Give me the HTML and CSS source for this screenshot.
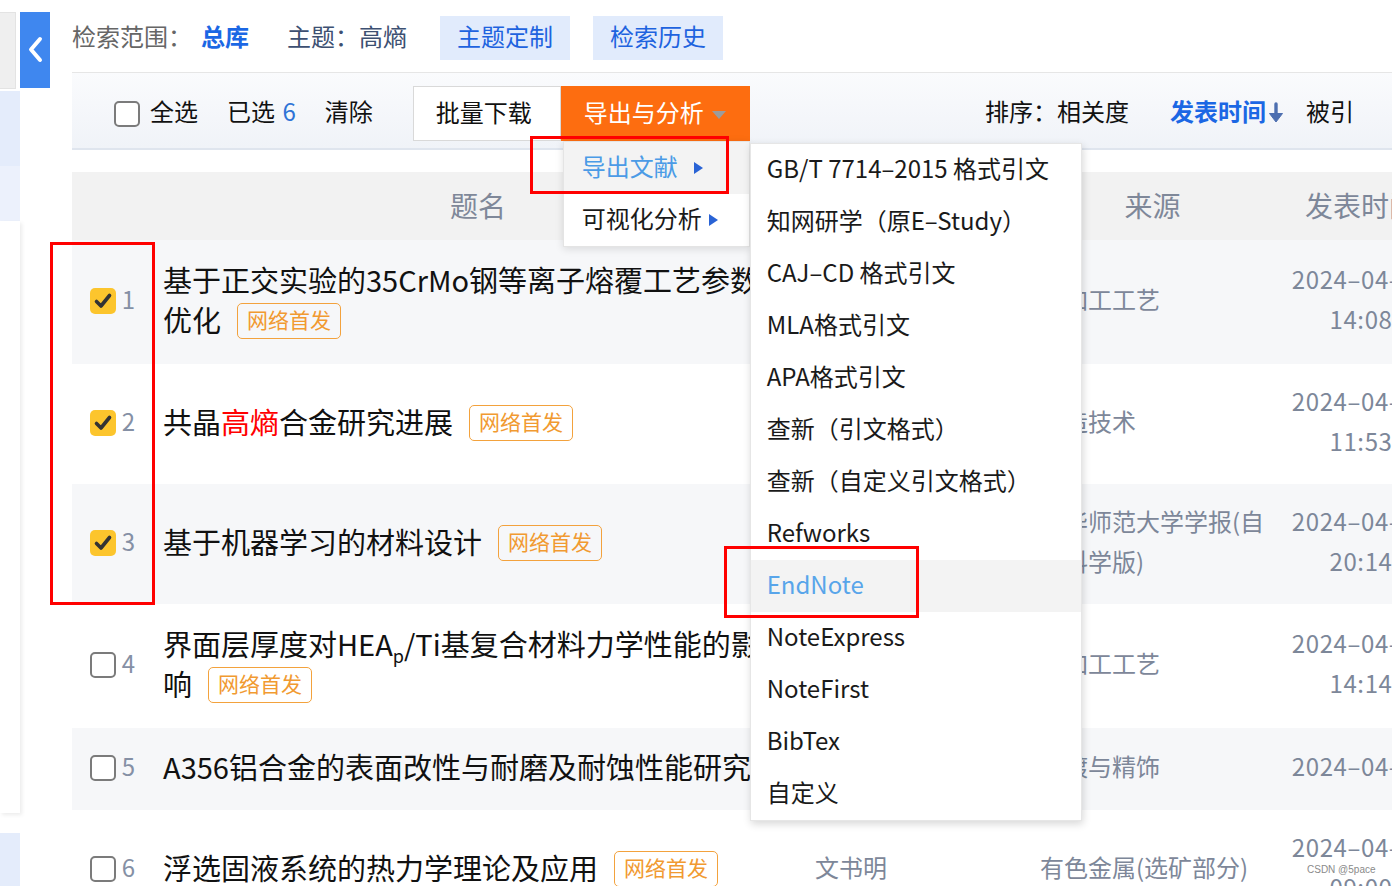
FILE: index.html
```html
<!DOCTYPE html>
<html lang="zh-CN">
<head>
<meta charset="utf-8">
<title>检索结果</title>
<link rel="stylesheet" href="styles.css">
</head>
<body>
<div class="page">
  <aside class="side">
    <div class="side-grey"></div>
    <div class="side-blue1"></div>
    <div class="side-blue2"></div>
    <div class="side-panel"></div>
    <div class="side-blue3"></div>
  </aside>
  <div class="collapse">
    <svg width="30" height="76" viewBox="0 0 30 76"><polyline points="20,27 11,37.5 20,48" fill="none" stroke="#fff" stroke-width="4" stroke-linecap="round" stroke-linejoin="round"/></svg>
  </div>
  <main class="main">
    <div class="crumbs">
      <span class="label">检索范围：</span>
      <span class="scope">总库</span>
      <span class="topic">主题：高熵</span>
      <span class="chip">主题定制</span>
      <span class="chip chip-2">检索历史</span>
    </div>

    <div class="toolbar">
      <span class="cb"></span>
      <span class="tb-text">全选</span>
      <span class="tb-text tb-sel">已选 <em>6</em></span>
      <span class="tb-text tb-clear">清除</span>
      <div class="btns">
        <span class="btn">批量下载</span>
        <div class="export">
          <span class="btn btn-orange">导出与分析<i class="caret"></i></span>
          <div class="menu">
            <div class="menu-item active">导出文献<i class="tri"></i></div>
            <div class="menu-item">可视化分析<i class="tri tri-2"></i></div>
            <ul class="submenu">
              <li>GB/T 7714–2015 格式引文</li>
              <li>知网研学（原E–Study）</li>
              <li>CAJ–CD 格式引文</li>
              <li>MLA格式引文</li>
              <li>APA格式引文</li>
              <li>查新（引文格式）</li>
              <li>查新（自定义引文格式）</li>
              <li>Refworks</li>
              <li class="hover">EndNote</li>
              <li>NoteExpress</li>
              <li>NoteFirst</li>
              <li>BibTex</li>
              <li>自定义</li>
            </ul>
          </div>
        </div>
      </div>
      <div class="sort">
        <span class="tb-text-r">排序：相关度</span>
        <span class="sort-on">发表时间<svg class="arrow" width="18" height="24" viewBox="0 0 18 24"><line x1="9" y1="3" x2="9" y2="16" stroke="#4d6fb0" stroke-width="3.4" stroke-linecap="round"/><polygon points="2.5,12.5 15.5,12.5 9,21" fill="#4d6fb0" stroke="#4d6fb0" stroke-width="1" stroke-linejoin="round"/></svg></span>
        <span class="tb-text-r sort-cite">被引</span>
      </div>
    </div>

    <div class="table">
      <div class="thead">
        <div class="c-check"></div>
        <div class="c-title th-center">题名</div>
        <div class="c-author th-center">作者</div>
        <div class="c-source th-center">来源</div>
        <div class="c-date">发表时间</div>
      </div>

      <div class="row row-odd row-tall">
        <div class="c-check"><span class="cb cb-on"><svg width="26" height="26" viewBox="0 0 26 26"><path d="M6.5 13.5 L11 18 L19.5 7.5" fill="none" stroke="#333" stroke-width="3.6" stroke-linecap="round" stroke-linejoin="round"/></svg></span><span class="num">1</span></div>
        <div class="c-title">基于正交实验的35CrMo钢等离子熔覆工艺参数优化<span class="tag">网络首发</span></div>
        <div class="c-author">李明</div>
        <div class="c-source">热加工工艺</div>
        <div class="c-date">2024–04–12 14:08</div>
      </div>

      <div class="row">
        <div class="c-check"><span class="cb cb-on"><svg width="26" height="26" viewBox="0 0 26 26"><path d="M6.5 13.5 L11 18 L19.5 7.5" fill="none" stroke="#333" stroke-width="3.6" stroke-linecap="round" stroke-linejoin="round"/></svg></span><span class="num">2</span></div>
        <div class="c-title">共晶<span class="hl">高熵</span>合金研究进展<span class="tag">网络首发</span></div>
        <div class="c-author">王强</div>
        <div class="c-source">铸造技术</div>
        <div class="c-date">2024–04–11 11:53</div>
      </div>

      <div class="row row-odd">
        <div class="c-check"><span class="cb cb-on"><svg width="26" height="26" viewBox="0 0 26 26"><path d="M6.5 13.5 L11 18 L19.5 7.5" fill="none" stroke="#333" stroke-width="3.6" stroke-linecap="round" stroke-linejoin="round"/></svg></span><span class="num">3</span></div>
        <div class="c-title">基于机器学习的材料设计<span class="tag">网络首发</span></div>
        <div class="c-author">张伟</div>
        <div class="c-source">西华师范大学学报(自然科学版)</div>
        <div class="c-date">2024–04–10 20:14</div>
      </div>

      <div class="row row-tall">
        <div class="c-check"><span class="cb"></span><span class="num">4</span></div>
        <div class="c-title">界面层厚度对HEA<sub>p</sub>/Ti基复合材料力学性能的影响<span class="tag">网络首发</span></div>
        <div class="c-author">刘洋</div>
        <div class="c-source">热加工工艺</div>
        <div class="c-date">2024–04–10 14:14</div>
      </div>

      <div class="row row-odd">
        <div class="c-check"><span class="cb"></span><span class="num">5</span></div>
        <div class="c-title">A356铝合金的表面改性与耐磨及耐蚀性能研究</div>
        <div class="c-author">陈静</div>
        <div class="c-source">电镀与精饰</div>
        <div class="c-date">2024–04–10</div>
      </div>

      <div class="row">
        <div class="c-check"><span class="cb"></span><span class="num">6</span></div>
        <div class="c-title">浮选固液系统的热力学理论及应用<span class="tag">网络首发</span></div>
        <div class="c-author">文书明</div>
        <div class="c-source">有色金属(选矿部分)</div>
        <div class="c-date">2024–04–09 09:00</div>
      </div>
    </div>
  </main>

  <div class="mark mark-export"></div>
  <div class="mark mark-endnote"></div>
  <div class="mark mark-checks"></div>
  <div class="watermark">CSDN @5pace</div>
</div>
</body>
</html>
```

FILE: styles.css
```css
html, body {
  margin: 0;
  padding: 0;
  width: 1392px;
  height: 886px;
  overflow: hidden;
  background: #fff;
}
body {
  font-family: "Noto Sans CJK SC", "Noto Sans", sans-serif;
  color: #111;
}
ul { margin: 0; padding: 0; list-style: none; }

.page {
  position: relative;
  display: flex;
  width: 1392px;
  height: 886px;
  overflow: hidden;
}

/* left sidebar */
.side {
  width: 20px;
  flex: none;
  display: flex;
  flex-direction: column;
}
.side-grey {
  margin-top: 12px;
  width: 15px;
  height: 75px;
  background: #efefef;
  border: 1px solid #e3e3e3;
  border-left: none;
}
.side-blue1 {
  margin-top: 2px;
  height: 75px;
  background: #e4ecfb;
}
.side-blue2 {
  height: 55px;
  background: #ecf1fc;
}
.side-panel {
  height: 592px;
  background: #fff;
  box-shadow: 2px 2px 4px rgba(0, 0, 0, 0.08);
}
.side-blue3 {
  margin-top: 20px;
  flex: 1;
  background: #e4ecfb;
}

.collapse {
  flex: none;
  width: 30px;
  height: 76px;
  margin-top: 12px;
  background: #3f87ef;
}
.collapse svg { display: block; }

.main {
  flex: 1;
  margin-left: 22px;
  min-width: 0;
}

/* crumbs row */
.crumbs {
  height: 72px;
  display: flex;
  align-items: flex-start;
  padding-top: 16px;
  box-sizing: border-box;
  font-size: 24px;
  line-height: 40px;
}
.crumbs span { padding-bottom: 4px; }
.label { color: #666; }
.scope { color: #1b67e4; font-weight: bold; margin-left: 9px; }
.topic { color: #3d5072; margin-left: 38px; }
.chip {
  margin-left: 33px;
  padding: 0 17px;
  background: #e1ebfc;
  color: #1e63df;
}
.chip-2 { margin-left: 23px; }

/* toolbar */
.toolbar {
  height: 78px;
  box-sizing: border-box;
  border-top: 1px solid #e6e6e6;
  border-bottom: 2px solid #dfe5ee;
  background: linear-gradient(#fafbfd, #f0f3f8);
  display: flex;
  align-items: center;
  padding: 6px 38px 0 42px;
  font-size: 24px;
}
.cb {
  flex: none;
  width: 26px;
  height: 26px;
  box-sizing: border-box;
  border: 2px solid #7b7b7b;
  border-radius: 5px;
  background: #fff;
}
.cb-on {
  border: none;
  background: #fcc52d;
}
.cb-on svg { display: block; }
.tb-text { margin-left: 10px; padding-bottom: 6px; }
.tb-text-r { padding-bottom: 6px; }
.tb-sel { margin-left: 29px; }
.tb-sel em { font-style: normal; color: #2f73d6; margin-left: 2px; }
.tb-clear { margin-left: 29px; }

.btns {
  display: flex;
  margin-left: 40px;
}
.btn {
  display: flex;
  align-items: center;
  height: 55px;
  box-sizing: border-box;
  width: 148px;
  padding-left: 22px;
  padding-bottom: 5px;
  background: #fff;
  border: 1px solid #d9d9d9;
}
.export { position: relative; }
.btn-orange {
  width: 189px;
  background: #fd6d10;
  border-color: #fd6d10;
  color: #fff;
}
.caret {
  margin-left: 8px;
  margin-top: 8px;
  width: 0;
  height: 0;
  border-left: 7px solid transparent;
  border-right: 7px solid transparent;
  border-top: 8px solid #9c9c9c;
}

.menu {
  position: absolute;
  left: 2px;
  top: 55px;
  width: 187px;
  box-sizing: border-box;
  background: #fff;
  border: 1px solid #e4e4e4;
  box-shadow: 0 2px 8px rgba(0, 0, 0, 0.12);
  z-index: 5;
}
.menu-item {
  height: 52px;
  box-sizing: border-box;
  padding-bottom: 5px;
  display: flex;
  align-items: center;
  padding-left: 18px;
  font-size: 24px;
  color: #1a1a1a;
}
.menu-item.active {
  background: #f3f3f3;
  color: #4b9be6;
}
.tri {
  margin-left: 16px;
  margin-top: 5px;
  width: 0;
  height: 0;
  border-top: 6px solid transparent;
  border-bottom: 6px solid transparent;
  border-left: 9px solid #2963d5;
}
.tri-2 { margin-left: 7px; }

.submenu {
  position: absolute;
  left: 186px;
  top: 1px;
  width: 332px;
  background: #fff;
  border: 1px solid #e6e6e6;
  box-sizing: border-box;
  box-shadow: 1px 3px 8px rgba(0, 0, 0, 0.16);
  z-index: 6;
}
.submenu li {
  height: 52px;
  line-height: 48px;
  box-sizing: border-box;
  padding-bottom: 4px;
  padding-left: 16px;
  font-size: 24px;
  color: #1a1a1a;
  white-space: nowrap;
}
.submenu li.hover {
  background: #f3f3f3;
  color: #58a5ea;
}

.sort {
  margin-left: auto;
  display: flex;
  align-items: center;
}
.sort-on {
  margin-left: 41px;
  padding-bottom: 6px;
  color: #1b67e4;
  font-weight: bold;
  display: flex;
  align-items: center;
}
.arrow { margin-left: 1px; margin-top: 4px; }
.sort-cite { margin-left: 21px; }

/* table */
.table {
  margin-top: 22px;
  width: 1378px;
}
.thead {
  display: flex;
  align-items: center;
  height: 68px;
  padding-bottom: 2px;
  box-sizing: border-box;
  background: #f2f2f2;
  font-size: 28px;
  color: #7f8899;
}
.row {
  display: flex;
  align-items: center;
  min-height: 82px;
  box-sizing: border-box;
  padding: 17px 0 23px;
  font-size: 24px;
  line-height: 40px;
}
.row-tall { padding: 19px 0 25px; }
.row-odd { background: #f6f7f9; }

.c-check {
  flex: none;
  width: 81px;
  display: flex;
  align-items: center;
  justify-content: center;
  gap: 6px;
  margin-top: 4px;
}
.num {
  color: #8590a5;
  font-size: 24px;
  line-height: 30px;
  padding-bottom: 4px;
}
.c-title {
  flex: none;
  width: 650px;
  box-sizing: border-box;
  padding: 0 21px 0 10px;
  font-size: 29px;
  color: #111;
}
.c-title sub {
  font-size: 18px;
  line-height: 0;
}
.hl { color: #ff0000; }
.tag {
  display: inline-block;
  vertical-align: middle;
  margin-left: 16px;
  margin-top: -6px;
  height: 36px;
  line-height: 31px;
  box-sizing: border-box;
  padding: 0 9px 3px;
  border: 1.5px solid #f3a23d;
  border-radius: 5px;
  font-size: 21px;
  color: #f19a31;
}
.c-author {
  flex: none;
  width: 227px;
  box-sizing: border-box;
  padding-left: 12px;
  color: #7d8799;
}
.c-source {
  flex: none;
  width: 245px;
  box-sizing: border-box;
  padding: 0 5px 0 10px;
  color: #7d8799;
}
.c-date {
  flex: none;
  width: 172px;
  text-align: center;
  color: #7d8799;
  letter-spacing: 0.6px;
}
.th-center { text-align: center; }
.thead .c-title,
.thead .c-author,
.thead .c-source {
  padding: 0;
  color: #7f8899;
  font-size: 28px;
}
.thead .c-date { font-size: 28px; white-space: nowrap; letter-spacing: 0; }

/* annotation boxes */
.mark {
  position: absolute;
  border: 3px solid #ff0000;
  box-sizing: border-box;
  z-index: 10;
}
.mark-export { left: 530px; top: 136px; width: 199px; height: 58px; }
.mark-endnote { left: 724px; top: 546px; width: 195px; height: 72px; }
.mark-checks { left: 50px; top: 242px; width: 105px; height: 363px; }

.watermark {
  position: absolute;
  left: 1307px;
  top: 864px;
  font-family: "Liberation Sans", sans-serif;
  font-size: 10px;
  color: #8a8a8a;
  text-shadow: 0 0 2px #fff;
  z-index: 10;
}
```
